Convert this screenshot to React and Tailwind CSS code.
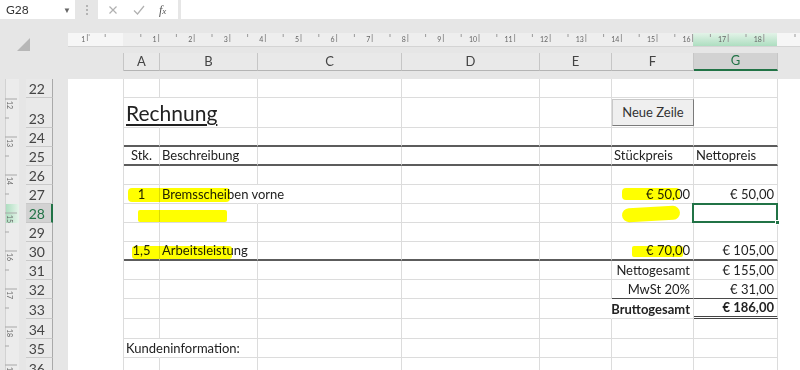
import React from "react";

const rows = [
  { n: 22, h: "h-[19px]" },
  { n: 23, h: "h-[30px]" },
  { n: 24, h: "h-[19px]" },
  { n: 25, h: "h-[19px]" },
  { n: 26, h: "h-[19px]" },
  { n: 27, h: "h-[19px]" },
  { n: 28, h: "h-[19px]" },
  { n: 29, h: "h-[19px]" },
  { n: 30, h: "h-[19px]" },
  { n: 31, h: "h-[19px]" },
  { n: 32, h: "h-[19px]" },
  { n: 33, h: "h-[20px]" },
  { n: 34, h: "h-[20px]" },
  { n: 35, h: "h-[19px]" },
  { n: 36, h: "h-[20px]" }
];

const columns = [
  { key: "A", w: "w-[36px]" },
  { key: "B", w: "w-[98px]" },
  { key: "C", w: "w-[144px]" },
  { key: "D", w: "w-[138px]" },
  { key: "E", w: "w-[72px]" },
  { key: "F", w: "w-[82px]" },
  { key: "G", w: "w-[84px]" }
];

// rows whose bottom edge carries a dark border over the whole table
const darkRows = [24, 25, 30];

// cell contents: align = left | center | right
const cells = {
  "23A": { text: "Rechnung", align: "left", cls: "text-[21px] leading-[26px] underline decoration-2 underline-offset-[3px] text-[#111]" },
  "25A": { text: "Stk.", align: "center" },
  "25B": { text: "Beschreibung", align: "left" },
  "25F": { text: "Stückpreis", align: "left" },
  "25G": { text: "Nettopreis", align: "left" },
  "27A": { text: "1", align: "center" },
  "27B": { text: "Bremsscheiben vorne", align: "left" },
  "27F": { text: "€ 50,00", align: "right" },
  "27G": { text: "€ 50,00", align: "right" },
  "30A": { text: "1,5", align: "center" },
  "30B": { text: "Arbeitsleistung", align: "left" },
  "30F": { text: "€ 70,00", align: "right" },
  "30G": { text: "€ 105,00", align: "right" },
  "31F": { text: "Nettogesamt", align: "right" },
  "31G": { text: "€ 155,00", align: "right" },
  "32F": { text: "MwSt 20%", align: "right" },
  "32G": { text: "€ 31,00", align: "right" },
  "33F": { text: "Bruttogesamt", align: "right", cls: "font-bold" },
  "33G": { text: "€ 186,00", align: "right", cls: "font-bold" },
  "35A": { text: "Kundeninformation:", align: "left" }
};

// text spilling into the neighbour hides that gridline
const hiddenRight = ["23A", "27B", "33E", "35A"];

function TopRuler() {
  const cm = 35.6;
  const start = 55;
  const marks = Array.from({ length: 18 }, (_, i) => i + 1);

  return (
    <svg width="732" height="14" className="block">
      <defs>
        <linearGradient id="rulerGreen" x1="0" y1="0" x2="0" y2="1">
          <stop offset="0%" stopColor="#e3f3e8" />
          <stop offset="100%" stopColor="#a9dcbd" />
        </linearGradient>
      </defs>
      <rect x="0" y="0" width="55" height="14" fill="#f6f6f6" />
      <rect x="55" y="0" width="654" height="14" fill="#eeeeee" />
      <rect x="709" y="0" width="23" height="14" fill="#f6f6f6" />
      <rect x="625" y="0" width="84" height="14" fill="url(#rulerGreen)" />
      <line x1="0" y1="13.5" x2="732" y2="13.5" stroke="#d4d4d4" />
      <line x1={start - cm} y1="1" x2={start - cm} y2="8" stroke="#9a9a9a" />
      <line x1={start - cm / 2} y1="1" x2={start - cm / 2} y2="4" stroke="#9a9a9a" />
      <line x1={start - cm * 0.95} y1="1" x2={start - cm * 0.95} y2="3" stroke="#b0b0b0" />
      <text x={start - cm - 2} y="9" fontSize="7" fill="#666" textAnchor="end" fontFamily="Lato, sans-serif">
        1
      </text>
      {marks.map((n) => {
        const x = start + cm * n;
        return (
          <g key={n}>
            <line x1={x - cm / 2} y1="1" x2={x - cm / 2} y2="4" stroke="#9a9a9a" />
            <line x1={x} y1="1" x2={x} y2="9" stroke="#9a9a9a" />
            <text x={x - 2} y="9" fontSize="7" fill="#666" textAnchor="end" fontFamily="Lato, sans-serif">
              {n}
            </text>
          </g>
        );
      })}
      <line x1="727" y1="1" x2="727" y2="4" stroke="#9a9a9a" />
    </svg>
  );
}

function SideRuler() {
  const marks = Array.from({ length: 8 }, (_, i) => i + 12);

  return (
    <svg width="26" height="291" className="block">
      <defs>
        <linearGradient id="sideGreen" x1="0" y1="0" x2="1" y2="0">
          <stop offset="0%" stopColor="#a9dcbd" />
          <stop offset="100%" stopColor="#e6f4ea" />
        </linearGradient>
      </defs>
      <rect x="5" y="0" width="14" height="291" fill="#ececec" />
      <rect x="5" y="125" width="14" height="19" fill="url(#sideGreen)" />
      <line x1="5.5" y1="0" x2="5.5" y2="291" stroke="#d2d2d2" />
      {marks.map((n, i) => {
        const y = 20 + 38 * i;
        return (
          <g key={n}>
            <line x1="5" y1={y} x2="17" y2={y} stroke="#a8a8a8" />
            <line x1="5" y1={y + 19} x2="9" y2={y + 19} stroke="#a8a8a8" />
            <text
              transform={`translate(7, ${y + 2}) rotate(90)`}
              fontSize="7"
              fill="#666"
              fontFamily="Lato, sans-serif"
            >
              {n}
            </text>
          </g>
        );
      })}
    </svg>
  );
}

function Cell({ row, col, dark }) {
  const id = `${row.n}${col.key}`;
  const data = cells[id];
  const hide = hiddenRight.includes(id);
  const thinDark = (row.n === 32 && (col.key === "F" || col.key === "G"));
  const doubleLine = row.n === 33 && col.key === "G";

  let bottom = "border-b border-b-[#dcdcdc]";
  if (dark) bottom = "border-b-2 border-b-[#5c5c5c]";
  if (thinDark) bottom = "border-b border-b-[#4a4a4a]";
  if (doubleLine) bottom = "border-b-[3px] border-double border-b-[#444]";

  const justify =
    data?.align === "right" ? "justify-end pr-[3px]" : data?.align === "center" ? "justify-center" : "justify-start pl-[2px]";

  return (
    <div
      className={`relative flex flex-none items-end ${col.w} ${justify} border-r ${
        hide ? "border-r-transparent" : "border-r-[#dcdcdc]"
      } ${bottom}`}
    >
      {data ? (
        <span className={`whitespace-nowrap pb-[1px] text-[13px] leading-[16px] text-[#222] ${data.cls || ""}`}>
          {data.text}
        </span>
      ) : null}

      {id === "23F" ? (
        <button className="absolute left-0 top-[1px] z-10 h-[27px] w-[82px] border border-[#c9c9c9] border-b-[#7a7a7a] border-r-[#7a7a7a] bg-[#efefef] text-[13px] text-[#333]">
          Neue Zeile
        </button>
      ) : null}

      {id === "28G" ? (
        <div className="absolute -left-[2px] -top-[1px] -right-[1px] -bottom-px z-10 border-2 border-[#217346]">
          <div className="absolute -bottom-[4px] -right-[4px] h-[5px] w-[5px] border border-white bg-[#217346]" />
        </div>
      ) : null}
    </div>
  );
}

function Highlight({ className }) {
  return <div className={`pointer-events-none absolute bg-[#ffff00] mix-blend-multiply ${className}`} />;
}

export default function App() {
  return (
    <div className="h-[370px] w-[800px] overflow-hidden bg-[#e6e6e6] font-['Lato',sans-serif] text-[#222]">
      {/* formula bar */}
      <div className="flex h-[22px] items-start">
        <div className="flex h-[19px] w-[75px] items-center justify-between bg-white pl-[6px] pr-[4px]">
          <span className="text-[12px] text-[#333]">G28</span>
          <span className="text-[8px] text-[#666]">▼</span>
        </div>
        <div className="flex h-[19px] w-[23px] flex-col items-center justify-center gap-[2px]">
          <span className="h-[2px] w-[2px] bg-[#b4b4b4]" />
          <span className="h-[2px] w-[2px] bg-[#b4b4b4]" />
          <span className="h-[2px] w-[2px] bg-[#b4b4b4]" />
        </div>
        <div className="flex h-[19px] w-[80px] items-center bg-white pl-[10px]">
          <svg width="10" height="10" viewBox="0 0 10 10" className="mr-[15px]">
            <path d="M1.5 1.5 L8.5 8.5 M8.5 1.5 L1.5 8.5" stroke="#b0b0b0" strokeWidth="1.2" />
          </svg>
          <svg width="12" height="10" viewBox="0 0 12 10" className="mr-[14px]">
            <path d="M1 5.5 L4.5 9 L11 1" stroke="#b0b0b0" strokeWidth="1.2" fill="none" />
          </svg>
          <span className="font-['Liberation_Serif',serif] text-[12px] italic text-[#555]">
            f<span className="text-[9px]">x</span>
          </span>
        </div>
        <div className="ml-[3px] h-[19px] flex-1 bg-white" />
      </div>

      {/* rulers + column headers */}
      <div className="mt-[11px] flex h-[38px]">
        <div className="w-[68px] pl-[17px] pt-[5px]">
          <svg width="13" height="13" viewBox="0 0 13 13">
            <path d="M13 0 L13 13 L0 13 Z" fill="#b7b7b7" />
          </svg>
        </div>
        <div className="flex flex-1 flex-col">
          <TopRuler />
          <div className="h-[6px]" />
          <div className="flex h-[18px]">
            <div className="w-[55px] flex-none" />
            <div className="flex border-l border-l-[#c6c6c6]">
              {columns.map((col) =>
                col.key === "G" ? (
                  <div
                    key={col.key}
                    className={`flex ${col.w} items-center justify-center border-b-2 border-r border-b-[#217346] border-r-[#c6c6c6] bg-[#d2d2d2] text-[13px] text-[#217346]`}
                  >
                    {col.key}
                  </div>
                ) : (
                  <div
                    key={col.key}
                    className={`flex ${col.w} items-center justify-center border-b border-r border-b-[#b4b4b4] border-r-[#c6c6c6] bg-[#e9e9e9] text-[13px] text-[#444]`}
                  >
                    {col.key}
                  </div>
                )
              )}
            </div>
          </div>
        </div>
      </div>

      <div className="h-[8px]" />

      {/* sheet */}
      <div className="flex h-[291px]">
        <SideRuler />

        <div className="flex w-[27px] flex-none flex-col">
          {rows.map((row) =>
            row.n === 28 ? (
              <div
                key={row.n}
                className={`flex ${row.h} flex-none items-end justify-end border-b border-r-2 border-b-[#c6c6c6] border-r-[#217346] bg-[#d2d2d2] pr-[6px] text-[14px] leading-[17px] text-[#217346]`}
              >
                {row.n}
              </div>
            ) : (
              <div
                key={row.n}
                className={`flex ${row.h} flex-none items-end justify-end border-b border-r border-b-[#c9c9c9] border-r-[#a9a9a9] bg-[#e9e9e9] pr-[7px] text-[14px] leading-[17px] text-[#444]`}
              >
                {row.n}
              </div>
            )
          )}
        </div>

        <div className="w-[15px] flex-none" />

        <div className="relative flex-1 bg-white pl-[55px]">
          <div className="flex w-fit flex-col border-l border-l-[#dcdcdc]">
            {rows.map((row) => (
              <div key={row.n} className={`flex ${row.h} flex-none`}>
                {columns.map((col) => (
                  <Cell key={col.key} row={row} col={col} dark={darkRows.includes(row.n)} />
                ))}
              </div>
            ))}
          </div>

          {/* marker strokes drawn over the sheet */}
          <Highlight className="left-[60px] top-[109px] h-[14px] w-[102px] rounded-[4px]" />
          <Highlight className="left-[70px] top-[131px] h-[12px] w-[89px] rounded-[2px]" />
          <Highlight className="left-[64px] top-[167px] h-[13px] w-[100px] rounded-[3px]" />
          <Highlight className="left-[554px] top-[109px] h-[12px] w-[58px] rounded-[4px]" />
          <Highlight className="left-[554px] top-[128px] h-[14px] w-[58px] -rotate-3 rounded-[7px]" />
          <Highlight className="left-[564px] top-[167px] h-[11px] w-[51px] rounded-[2px]" />
        </div>
      </div>
    </div>
  );
}
